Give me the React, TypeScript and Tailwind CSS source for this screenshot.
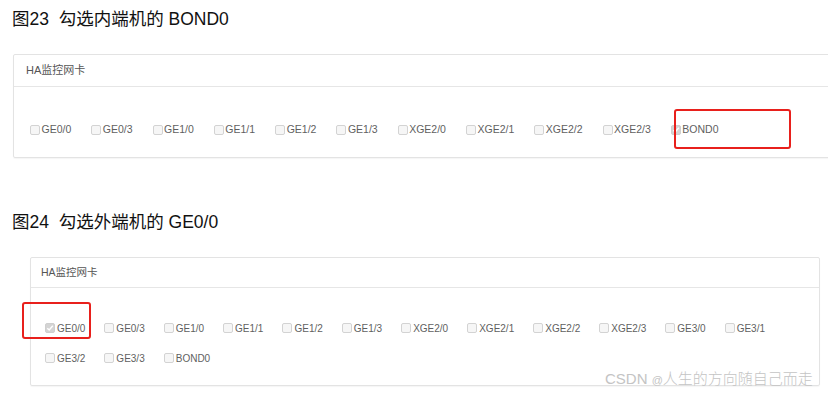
const innerPorts = ['GE0/0', 'GE0/3', 'GE1/0', 'GE1/1', 'GE1/2', 'GE1/3', 'XGE2/0', 'XGE2/1', 'XGE2/2', 'XGE2/3', 'BOND0'];
const outerPorts = ['GE0/0', 'GE0/3', 'GE1/0', 'GE1/1', 'GE1/2', 'GE1/3', 'XGE2/0', 'XGE2/1', 'XGE2/2', 'XGE2/3', 'GE3/0', 'GE3/1', 'GE3/2', 'GE3/3', 'BOND0'];

const font = { fontFamily: '"Liberation Sans", Arial, "Noto Sans CJK SC", sans-serif' };

function Box({ checked }: { checked: boolean }) {
  if (checked) {
    return (
      <span className="w-[10px] h-[10px] rounded-[2px] bg-[#d4d4d4] border border-[#cfcfcf] flex items-center justify-center shrink-0">
        <svg width="8" height="8" viewBox="0 0 8 8">
          <path d="M1.3 4.2 L3.2 6 L6.8 1.8" fill="none" stroke="#ffffff" strokeWidth="1.4" />
        </svg>
      </span>
    );
  }
  return <span className="w-[10px] h-[10px] rounded-[2px] bg-[#f6f6f6] border border-[#d3d3d3] shrink-0" />;
}

function Port({ name, checked, small }: { name: string; checked: boolean; small?: boolean }) {
  return (
    <label className={small ? 'flex items-center h-[20px] mr-[19px]' : 'flex items-center h-[20px] mr-[20px]'}>
      <Box checked={checked} />
      <span className={small ? 'ml-[2px] text-[10px] text-[#5f5f5f]' : 'ml-[1.5px] text-[10.5px] text-[#5f5f5f]'}>{name}</span>
    </label>
  );
}

export default function App() {
  return (
    <div className="relative w-[828px] h-[395px] overflow-hidden bg-white" style={font}>
      <h1 className="ml-[12px] mt-[8px] text-[17.5px] leading-[22px] text-[#111]">图23&nbsp; 勾选内端机的 BOND0</h1>

      <div className="mt-[24px] ml-[13px] w-[830px] border border-[#e3e3e3] rounded-[2px] shadow-[0_1px_1px_rgba(0,0,0,0.04)]">
        <div className="h-[32px] border-b border-[#e6e6e6] flex items-center pl-[12px] text-[11px] text-[#555]">HA监控网卡</div>
        <div className="h-[70px] pt-[33px] pl-[16px] flex">
          {innerPorts.map((p) => (
            <Port key={p} name={p} checked={p === 'BOND0'} />
          ))}
        </div>
      </div>

      <h1 className="ml-[12px] mt-[53px] text-[17.5px] leading-[22px] text-[#111]">图24&nbsp; 勾选外端机的 GE0/0</h1>

      <div className="mt-[24px] ml-[30px] w-[790px] border border-[#e3e3e3] rounded-[2px] shadow-[0_1px_1px_rgba(0,0,0,0.04)]">
        <div className="h-[30px] border-b border-[#e6e6e6] flex items-center pl-[10px] text-[10.5px] text-[#555]">HA监控网卡</div>
        <div className="h-[97px] pt-[30px] pl-[14px] pr-[14px] flex flex-wrap content-start gap-y-[10px]">
          {outerPorts.map((p, i) => (
            <Port key={p + i} name={p} checked={i === 0} small />
          ))}
        </div>
      </div>

      <div className="absolute left-[674px] top-[109px] w-[117px] h-[40px] border-2 border-[#e8201c] rounded-[3px]" />
      <div className="absolute left-[22px] top-[302px] w-[69px] h-[37px] border-2 border-[#e8201c] rounded-[3px]" />

      <div className="absolute left-[605px] top-[369px] whitespace-nowrap text-[15px] leading-[20px] font-light text-[#c4c4c4]">
        CSDN <span className="text-[11px]">@</span>人生的方向随自己而走
      </div>
    </div>
  );
}
